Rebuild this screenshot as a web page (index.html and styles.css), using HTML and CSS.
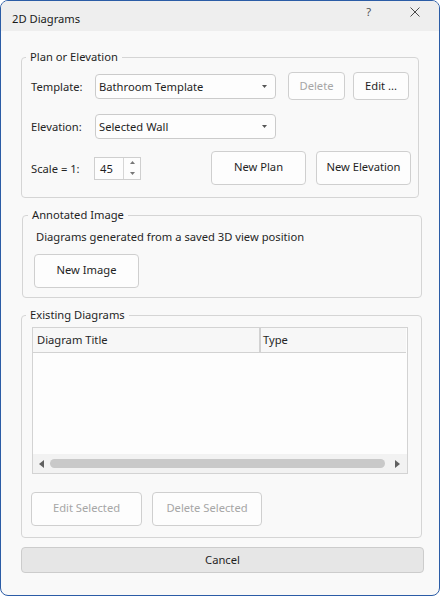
FILE: index.html
```html
<!DOCTYPE html>
<html>
<head>
<meta charset="utf-8">
<link rel="stylesheet" href="styles.css">
</head>
<body>
<div class="window">
  <div class="titlebar">
    <span class="title">2D Diagrams</span>
    <span class="help">?</span>
    <svg class="close" width="10" height="10" viewBox="0 0 10 10"><path d="M0.5 0.5L9.5 9.5M9.5 0.5L0.5 9.5" stroke="#4a4a4a" stroke-width="1" fill="none"/></svg>
  </div>
  <div class="content">
    <fieldset class="group g1">
      <legend>Plan or Elevation</legend>
      <div class="row r1">
        <span class="label">Template:</span>
        <div class="combo"><span class="combo-text">Bathroom Template</span><svg class="caret" width="5" height="3" viewBox="0 0 5 3"><path d="M0 0H5L2.5 3Z" fill="#555"/></svg></div>
        <button class="btn disabled btn-delete">Delete</button>
        <button class="btn btn-edit">Edit ...</button>
      </div>
      <div class="row r2">
        <span class="label">Elevation:</span>
        <div class="combo"><span class="combo-text">Selected Wall</span><svg class="caret" width="5" height="3" viewBox="0 0 5 3"><path d="M0 0H5L2.5 3Z" fill="#555"/></svg></div>
      </div>
      <div class="row r3">
        <span class="label">Scale = 1:</span>
        <div class="spin">
          <span class="spin-text">45</span>
          <span class="spin-arrows">
            <span class="spin-half"><svg width="5" height="3" viewBox="0 0 5 3"><path d="M0 3H5L2.5 0Z" fill="#777"/></svg></span>
            <span class="spin-half"><svg width="5" height="3" viewBox="0 0 5 3"><path d="M0 0H5L2.5 3Z" fill="#777"/></svg></span>
          </span>
        </div>
        <div class="r3-buttons">
          <button class="btn big btn-plan">New Plan</button>
          <button class="btn big btn-elev">New Elevation</button>
        </div>
      </div>
    </fieldset>

    <fieldset class="group g2">
      <legend>Annotated Image</legend>
      <div class="desc">Diagrams generated from a saved 3D view position</div>
      <button class="btn big btn-image">New Image</button>
    </fieldset>

    <fieldset class="group g3">
      <legend>Existing Diagrams</legend>
      <div class="table">
        <div class="thead">
          <div class="th th-title">Diagram Title</div>
          <div class="th th-type">Type</div>
        </div>
        <div class="tbody"></div>
        <div class="hscroll">
          <svg class="sarrow" width="5" height="8" viewBox="0 0 5 8"><path d="M5 0V8L0 4Z" fill="#606060"/></svg>
          <div class="thumb"></div>
          <svg class="sarrow" width="5" height="8" viewBox="0 0 5 8"><path d="M0 0V8L5 4Z" fill="#606060"/></svg>
        </div>
      </div>
      <div class="sel-buttons">
        <button class="btn big disabled btn-edsel">Edit Selected</button>
        <button class="btn big disabled btn-delsel">Delete Selected</button>
      </div>
    </fieldset>

    <button class="btn cancel">Cancel</button>
  </div>
</div>
</body>
</html>
```
FILE: styles.css
```css
* { box-sizing: border-box; }

body {
  margin: 0;
  background: #ffffff;
  font-family: "Noto Sans", "Open Sans", sans-serif;
  font-size: 11.2px;
  color: #1f1f1f;
}

.window {
  width: 440px;
  height: 596px;
  border: 1px solid #2b5ca6;
  border-radius: 8px;
  overflow: hidden;
  background: #f9f9f9;
  display: flex;
  flex-direction: column;
}

.titlebar {
  flex: none;
  height: 30px;
  background: #eeeeee;
  display: flex;
  align-items: flex-start;
}

.title {
  margin: 10px 0 0 11px;
  line-height: 16px;
  color: #1a1a1a;
}

.help {
  margin: 3px 0 0 auto;
  line-height: 16px;
  color: #505050;
}

.close {
  margin: 6px 19px 0 39px;
}

.content {
  flex: 1;
  display: flex;
  flex-direction: column;
  padding: 18px 17px 0 20px;
}

.group {
  margin: 0;
  min-width: 0;
  border: 1px solid #d5d5d5;
  border-radius: 4px;
}

.group legend {
  line-height: 16px;
  padding: 0 4px;
  color: #1f1f1f;
}

.g1 {
  margin-right: 3px;
  padding: 7px 7px 12px 9px;
}
.g1 legend { margin-left: -5px; }

.row {
  display: flex;
  align-items: center;
}

.r1 { height: 28px; }
.r2 { height: 28px; margin-top: 12px; }
.r3 { height: 34px; margin-top: 11px; }

.label {
  flex: none;
  width: 64px;
  color: #262626;
}

.combo {
  flex: none;
  width: 181px;
  height: 25px;
  border: 1px solid #cbcbcb;
  border-radius: 4px;
  background: #fdfdfd;
  display: flex;
  align-items: center;
  padding: 0 8px 0 3px;
}

.combo-text { flex: 1; }

.btn {
  font: inherit;
  color: #1f1f1f;
  background: #fdfdfd;
  border: 1px solid #cfcfcf;
  border-radius: 4px;
  padding: 0 0 1px;
  height: 28px;
}

.btn.disabled { color: #a6a6a6; }
.btn.big { height: 34px; padding-bottom: 3px; }

.btn-delete { width: 57px; margin-left: 12px; }
.btn-edit { width: 56px; margin-left: 8px; }

.spin {
  flex: none;
  display: flex;
  width: 47px;
  height: 23px;
  margin-left: -1px;
  border: 1px solid #cfcfcf;
  background: #fdfdfd;
}

.spin-text {
  width: 29px;
  padding-left: 5px;
  line-height: 21px;
  border-right: 1px solid #d6d6d6;
}

.spin-arrows {
  flex: 1;
  display: flex;
  flex-direction: column;
}

.spin-half {
  flex: 1;
  display: flex;
  align-items: center;
  justify-content: center;
}

.r3-buttons {
  margin-left: auto;
  display: flex;
  gap: 10px;
}

.btn-plan, .btn-elev { width: 95px; }

.g2 {
  margin: 9px 0 0 1px;
  padding: 6px 10px 9px 13px;
}
.g2 legend { margin-left: -8px; }

.desc {
  line-height: 16px;
  color: #262626;
}

.btn-image {
  display: block;
  width: 105px;
  margin: 9px 0 0 -2px;
}

.g3 {
  margin-top: 9px;
  padding: 4px 13px 11px 10px;
}
.g3 legend { margin-left: -6px; }

.table {
  height: 147px;
  border: 1px solid #d3d3d3;
  background: #fdfdfd;
  display: flex;
  flex-direction: column;
}

.thead {
  flex: none;
  height: 25px;
  display: flex;
  background: #f7f7f7;
  border-bottom: 1px solid #d2d2d2;
  margin-right: 1px;
}

.th {
  line-height: 24px;
  color: #262626;
}

.th-title {
  width: 228px;
  padding-left: 4px;
  border-right: 2px solid #d2d2d2;
}

.th-type {
  flex: 1;
  padding-left: 2px;
}

.tbody { flex: 1; }

.hscroll {
  flex: none;
  height: 19px;
  background: #f2f2f2;
  display: flex;
  align-items: center;
  padding: 0 7px 0 6px;
}

.thumb {
  flex: 1;
  height: 9px;
  margin: 0 10px 0 6px;
  border-radius: 5px;
  background: #c9c9c9;
}

.sel-buttons {
  display: flex;
  margin-top: 18px;
}

.btn-edsel { width: 111px; margin-left: -1px; }
.btn-delsel { width: 110px; margin-left: 10px; }

.cancel {
  margin-top: 9px;
  width: 403px;
  height: 26px;
  background: #e6e6e6;
  border-color: #cccccc;
}
```
